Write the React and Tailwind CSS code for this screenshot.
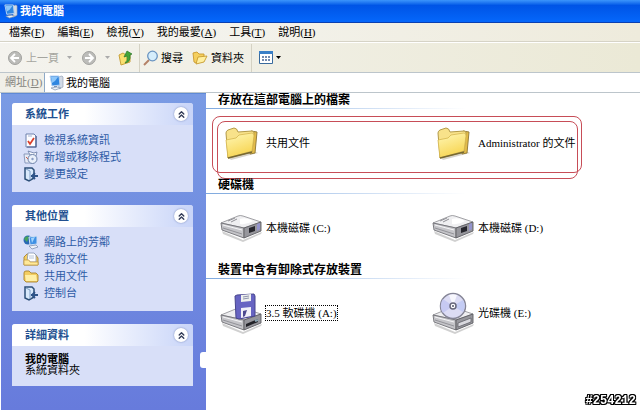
import React from 'react';
import { ChevronsUp } from 'lucide-react';

const menus = [
  { name: '檔案', hotkey: 'F' },
  { name: '編輯', hotkey: 'E' },
  { name: '檢視', hotkey: 'V' },
  { name: '我的最愛', hotkey: 'A' },
  { name: '工具', hotkey: 'T' },
  { name: '說明', hotkey: 'H' },
];

const ComputerIcon = ({ className }) => (
  <svg viewBox="0 0 16 16" className={className} aria-hidden="true">
    <path d="M10 2 L14 1 L15 2 V12 L11 14 Z" fill="#d3dbe6" stroke="#8796ab" strokeWidth=".6" />
    <path d="M2 1 L11 1 L12 10 L4 11 Z" fill="#2f86e0" stroke="#b9d3f2" strokeWidth="1" />
    <path d="M3 2 L10 2 L7 6 L4 8 Z" fill="#8cc6fa" />
    <path d="M6 11 L9 11 V12 H6 Z" fill="#7c93b5" />
    <path d="M3 13 L9 12 L13 13 L7 15 Z" fill="#eef2f7" stroke="#7f92ad" strokeWidth=".7" />
  </svg>
);

const SmallFolder = ({ open }) => (
  <svg viewBox="0 0 16 16" className="h-4 w-4 shrink-0" aria-hidden="true">
    {open ? (
      <>
        <path d="M1 3 L5 2 L7 4 L12 4 V7 L4 13 L2 12 Z" fill="#f5cf5e" stroke="#c9982e" strokeWidth=".9" />
        <path d="M4 14 L6 7 L15 6 L12 12 Z" fill="#ffef9f" stroke="#c79b2f" strokeWidth=".9" />
      </>
    ) : (
      <>
        <path d="M1 5 Q1 3 3 3 H6 L8 5 H13 L15 7 V13 L14 14 H3 L1 12 Z" fill="#f3cd62" stroke="#a9832f" strokeWidth=".9" />
        <path d="M2 7 H13 L14 13 H3 Z" fill="#ffefa6" />
      </>
    )}
  </svg>
);

const InfoIcon = () => (
  <svg viewBox="0 0 16 16" className="h-4 w-4 shrink-0" aria-hidden="true">
    <path d="M3 2 H11 L13 4 V15 H3 Z" fill="#fdfdff" stroke="#6d80ad" strokeWidth="1" />
    <path d="M13 4 V15 H4" fill="none" stroke="#4c5f8e" strokeWidth="1.200" />
    <path d="M5 4 H9" stroke="#a4b2d4" />
    <path d="M5 9 L7 12 L11 6" fill="none" stroke="#d9402c" strokeWidth="1.800" />
  </svg>
);

const ProgramsIcon = () => (
  <svg viewBox="0 0 16 16" className="h-4 w-4 shrink-0" aria-hidden="true">
    <path d="M1 5 H8 V14 H2 Z" fill="#e6ebf6" stroke="#8292b5" strokeWidth=".9" />
    <path d="M5 2 L11 4 L14 3 L13 7 L7 6 Z" fill="#f5f7fc" stroke="#7486ad" strokeWidth=".9" />
    <circle cx="9.500" cy="10" r="4.500" fill="#eaf0fa" stroke="#6d80a8" />
    <circle cx="9.500" cy="10" r="1.200" fill="#8a9cc4" />
    <path d="M3 8 L5 10" stroke="#c9614f" />
  </svg>
);

const SettingsIcon = () => (
  <svg viewBox="0 0 16 16" className="h-4 w-4 shrink-0" aria-hidden="true">
    <path d="M2 2 L9 2 L11 4 V12 L6 15 L2 13 Z" fill="#d9e9fb" stroke="#2d4f78" strokeWidth="1.500" />
    <path d="M3 3 L7 5 V14" fill="none" stroke="#7c9cc4" />
    <path d="M8 10 H15 M12 7 L9 10 L12 13" fill="none" stroke="#2f5488" strokeWidth="1.800" />
  </svg>
);

const NetworkIcon = () => (
  <svg viewBox="0 0 16 16" className="h-4 w-4 shrink-0" aria-hidden="true">
    <circle cx="5" cy="6" r="4.500" fill="#2868b4" />
    <path d="M1 5 Q3 1 6 3 L4 8 Z" fill="#46a35c" />
    <path d="M6 3 L14 2 V10 L7 11 Z" fill="#3f90e4" stroke="#d1e0f4" />
    <path d="M8 4 L12 3 L9 9 Z" fill="#a2d4fb" />
    <path d="M6 12 L13 11 L15 13 L9 15 Z" fill="#eef2f8" stroke="#7287aa" strokeWidth=".7" />
  </svg>
);

const DocumentsIcon = () => (
  <svg viewBox="0 0 16 16" className="h-4 w-4 shrink-0" aria-hidden="true">
    <path d="M1 14 V6 L4 3 H12 L15 7 V14 Z" fill="#f3cf68" stroke="#a9832f" strokeWidth=".9" />
    <path d="M5 2 H11 L13 4 V11 H4 Z" fill="#fff" stroke="#8796b3" strokeWidth=".8" />
    <path d="M6 5 H11 M6 7 H11" stroke="#a5b6d1" strokeWidth=".8" />
    <path d="M1 9 H6 L7 11 H15 V14 H1 Z" fill="#ffe999" stroke="#c19a3e" strokeWidth=".7" />
  </svg>
);

const FolderIcon = () => (
  <svg viewBox="0 0 42 42" className="h-[42px] w-[42px]" aria-hidden="true">
    <defs>
      <linearGradient id="folderFace" x1="0" y1="0" x2=".4" y2="1">
        <stop offset="0" stopColor="#fff8b8" />
        <stop offset="1" stopColor="#f7d552" />
      </linearGradient>
    </defs>
    <path d="M8 36 L32 29 L37 31 L10 38 Z" fill="#9a927a" opacity=".4" />
    <path d="M30 9 L36 10 L34 31 L29 32 Z" fill="#e3bb48" stroke="#97803d" />
    <path d="M5 11 Q5 9 7 8 L13 6 Q16 6 17 10 L31 9 Q33 9 33 11 L31 30 L7 36 Z" fill="#f8e28a" stroke="#b39a49" />
    <path d="M5 18 L15 16 L18 13 L31 11 Q33 11 33 14 L31 29 L7 36 Z" fill="url(#folderFace)" stroke="#d5b64f" strokeWidth=".8" />
    <path d="M7 36 L31 30" stroke="#766832" strokeWidth="1.500" />
  </svg>
);

// shared lower body of all the drive icons, origin at the top of the case
const DriveBody = () => (
  <>
    <path d="M2 17 L23 26 L42 18 L41 20 L23 28 L3 20 Z" fill="#777" opacity=".35" />
    <path d="M1 9 L18 2 Q20 1 23 2 L41 8 L24 14 Z" fill="#efeff1" stroke="#96969b" strokeWidth=".9" />
    <path d="M1 9 L24 14 V24 L2 16 Z" fill="#c5c5c9" stroke="#707076" strokeWidth=".9" />
    <path d="M24 14 L41 8 V17 L24 24 Z" fill="#96969c" stroke="#5d5d63" strokeWidth=".9" />
    <path d="M3 11 L22 16" stroke="#f5f5f7" />
    <path d="M3 14 L22 20" stroke="#85858c" strokeWidth=".8" />
  </>
);

const DiskIcon = () => (
  <svg viewBox="0 0 43 28" className="h-[28px] w-[43px]" aria-hidden="true">
    <DriveBody />
    <path d="M8 7 L15 4 M11 8 L17 5" stroke="#909096" />
    <path d="M20 10 Q27 11 33 7 Q27 3 20 5 Z" fill="#fff" />
    <path d="M29 14 L35 12 V17 L29 19 Z" fill="#26262d" />
    <path d="M37 10 L40 9 V15 L37 17 Z" fill="#9494cd" />
  </svg>
);

const FloppyIcon = () => (
  <svg viewBox="0 0 43 42" className="h-[42px] w-[43px]" aria-hidden="true">
    <g transform="translate(0 14)"><DriveBody /></g>
    <path d="M15 4 L17 3 L34 2 L35 4 V24 L19 27 L16 26 Z" fill="#6764c2" stroke="#47458d" />
    <path d="M21 3 L31 2 V9 L21 10 Z" fill="#eef0ee" />
    <path d="M23 5 L29 4 M23 7 L29 6" stroke="#8e93ac" />
    <path d="M21 16 L31 15 V24 L21 26 Z" fill="#f1f1f8" />
    <path d="M23 19 L27 18 L25 24 L23 25 Z" fill="#4c498f" />
    <path d="M26 32 L38 27 V30 L26 35 Z" fill="#222228" />
    <path d="M35 29 L38 28" stroke="#89a4b2" strokeWidth="2" />
  </svg>
);

const CdIcon = () => (
  <svg viewBox="0 0 43 42" className="h-[42px] w-[43px]" aria-hidden="true">
    <g transform="translate(0 14)"><DriveBody /></g>
    <path d="M26 31 L39 26 V30 L26 35 Z" fill="#d9d9df" stroke="#626268" strokeWidth=".8" />
    <circle cx="21" cy="14" r="12.500" fill="#dcdcf4" stroke="#858596" strokeWidth="1.500" />
    <path d="M21 14 L11 7 A12 12 0 0 0 11 21 Z" fill="#c6c9f2" />
    <path d="M21 14 L31 8 A12 12 0 0 1 31 20 Z" fill="#c4ccf4" />
    <path d="M21 14 L17 3 A12 12 0 0 1 25 3 Z" fill="#f7f7fd" />
    <circle cx="21" cy="14" r="3" fill="#fff" stroke="#67677a" strokeWidth="1.500" />
    <circle cx="21" cy="14" r="1" fill="#55556a" />
  </svg>
);

const TaskPanel = ({ title, children }) => (
  <section className="overflow-hidden rounded-t-[3px] bg-[#d8dff8]">
    <h2>
      <button className="flex h-[22px] w-full items-center justify-between bg-linear-to-r from-white from-40% to-[#c8d4f8] pr-[5px] pl-[13px] font-bold text-[#215090]">
        {title}
        <span className="grid h-[14px] w-[14px] place-items-center rounded-full bg-white text-[#333c58] shadow-[0_0_2px_#7384b6]">
          <ChevronsUp size={11} strokeWidth={3} />
        </span>
      </button>
    </h2>
    {children}
  </section>
);

const TaskList = ({ items }) => (
  <ul className="pt-[6px] pb-[10px] pl-[11px]">
    {items.map(({ label, icon }) => (
      <li key={label}>
        <a href="#" className="flex h-[17px] items-center gap-[5px] text-[#2e5ba6]">
          {icon}
          {label}
        </a>
      </li>
    ))}
  </ul>
);

const FileSection = ({ title, items, children }) => (
  <section className="relative">
    <h2 className="h-[15px] pl-[12px] text-[12px] leading-[15px] font-bold">{title}</h2>
    <div className="h-px w-[60%] bg-linear-to-r from-[#7fa9de] to-white" />
    <div className="flex h-[69px] items-center pb-[2px] pl-[14px]">
      {items.map(({ label, icon, focused }) => (
        <button key={label} className="flex w-[212px] shrink-0 items-center gap-[3px] text-left last:w-auto">
          <span className="grid w-[43px] shrink-0 place-items-center">{icon}</span>
          <span className={focused ? 'whitespace-nowrap outline-1 outline-dotted outline-black' : 'whitespace-nowrap'}>
            {label}
          </span>
        </button>
      ))}
    </div>
    {children}
  </section>
);

const systemTasks = [
  { label: '檢視系統資訊', icon: <InfoIcon /> },
  { label: '新增或移除程式', icon: <ProgramsIcon /> },
  { label: '變更設定', icon: <SettingsIcon /> },
];

const otherPlaces = [
  { label: '網路上的芳鄰', icon: <NetworkIcon /> },
  { label: '我的文件', icon: <DocumentsIcon /> },
  { label: '共用文件', icon: <SmallFolder /> },
  { label: '控制台', icon: <SettingsIcon /> },
];

const Caret = ({ className }) => (
  <svg viewBox="0 0 5 3" className={`h-[3px] w-[5px] ${className}`} aria-hidden="true">
    <path d="M0 0 H5 L2.500 3 Z" fill="currentColor" />
  </svg>
);

const Toolbar = () => (
  <div className="flex h-[30px] items-center border-t border-white bg-linear-to-r from-[#f4f3ee] to-[#ebe9d6] pl-[7px]">
    <button className="flex items-center gap-[3px] text-[#a5a59f]">
      <svg viewBox="0 0 16 16" className="h-4 w-4" aria-hidden="true">
        <circle cx="8" cy="8" r="6.500" fill="#bcbcb9" stroke="#a2a29f" />
        <path d="M12 8 H5 M8 4 L4 8 L8 12" fill="none" stroke="#fff" strokeWidth="1.800" />
      </svg>
      上一頁
    </button>
    <Caret className="ml-[8px] text-[#aaa]" />
    <button className="ml-[9px]" aria-label="下一頁">
      <svg viewBox="0 0 16 16" className="h-4 w-4" aria-hidden="true">
        <circle cx="8" cy="8" r="6.500" fill="#bcbcb9" stroke="#a2a29f" />
        <path d="M4 8 H11 M8 4 L12 8 L8 12" fill="none" stroke="#fff" strokeWidth="1.800" />
      </svg>
    </button>
    <Caret className="ml-[8px] text-[#aaa]" />
    <button className="ml-[8px]" aria-label="上移">
      <svg viewBox="0 0 16 16" className="h-4 w-4" aria-hidden="true">
        <path d="M1 5 L5 3 L8 5 L12 4 V12 L3 15 Z" fill="#f9e070" stroke="#c9a23c" />
        <path d="M7 13 Q10 11 9 6 L6 7 L9 1 L14 4 L12 5 Q13 12 7 13 Z" fill="#43a539" stroke="#26752a" strokeWidth=".7" />
      </svg>
    </button>
    <span className="ml-[5px] h-[28px] w-px bg-[#d5d2c4]" />
    <button className="ml-[3px] flex items-center gap-[2px]">
      <svg viewBox="0 0 16 16" className="h-4 w-4" aria-hidden="true">
        <path d="M6 10 L1 15" stroke="#b58268" strokeWidth="2" />
        <circle cx="9.500" cy="6" r="4.800" fill="#d5edfc" stroke="#6a94c1" strokeWidth="1.300" />
      </svg>
      搜尋
    </button>
    <button className="ml-[9px] flex items-center gap-[3px]">
      <SmallFolder open />
      資料夾
    </button>
    <span className="ml-[7px] h-[28px] w-px bg-[#d5d2c4]" />
    <button className="ml-[7px] flex items-center gap-[3px]" aria-label="檢視方式">
      <svg viewBox="0 0 14 13" className="h-[13px] w-[14px]" aria-hidden="true">
        <path d="M.5 .5 H13.500 V12.500 H.5 Z" fill="#fff" stroke="#396a9d" />
        <path d="M0 1.500 H14" stroke="#397fc7" strokeWidth="3" />
        <path d="M3 6 H5 M6 6 H8 M9 6 H11 M3 9 H5 M6 9 H8 M9 9 H11" stroke="#456595" strokeWidth="1.500" />
      </svg>
      <Caret className="text-black" />
    </button>
  </div>
);

const App = () => {
  return (
    <div className="flex min-h-screen flex-col bg-white font-['Liberation_Serif','Noto_Sans_CJK_TC',serif] text-[11px] leading-[14px] text-black">
      <header className="flex h-[23px] items-center gap-[2px] border-b border-[#0a3fb0] bg-linear-to-b from-[#3c95fb] via-[#0054e6] via-25% to-[#0567fb] pl-[3px] text-white">
        <ComputerIcon className="h-[15px] w-[15px]" />
        <h1 className="font-bold">我的電腦</h1>
      </header>

      <nav className="flex h-[19px] items-center gap-[13px] border-b border-[#d6d3c6] bg-linear-to-r from-[#f6f6f4] to-[#eeebdc] pl-[9px]">
        {menus.map((menu) => (
          <button key={menu.name} className="whitespace-nowrap">
            {menu.name}(<u>{menu.hotkey}</u>)
          </button>
        ))}
      </nav>

      <Toolbar />

      <div className="flex h-[21px] border-y border-[#bcc5cb] bg-[#f0efe8]">
        <label htmlFor="address" className="w-[44px] shrink-0 pl-[5px] leading-[18px] whitespace-nowrap text-[#85857f]">
          網址(<u>D</u>)
        </label>
        <div className="flex grow items-center gap-[2px] border-l border-[#8eaac8] bg-white pl-[3px]">
          <ComputerIcon className="h-[16px] w-[16px]" />
          <input id="address" defaultValue="我的電腦" className="min-w-0 grow outline-none" />
        </div>
      </div>

      <div className="flex grow">
        <aside className="relative ml-px flex w-[205px] shrink-0 flex-col gap-[13px] border-t border-[#5f8ad6] bg-linear-to-b from-[#7a9be4] to-[#677bdc] pt-[9px] pr-[13px] pl-[11px]">
          <TaskPanel title="系統工作">
            <TaskList items={systemTasks} />
          </TaskPanel>
          <TaskPanel title="其他位置">
            <TaskList items={otherPlaces} />
          </TaskPanel>
          <TaskPanel title="詳細資料">
            <div className="pt-[8px] pb-[10px] pl-[13px] leading-[11px]">
              <p className="font-bold">我的電腦</p>
              <p>系統資料夾</p>
            </div>
          </TaskPanel>
          <span className="absolute right-0 bottom-[42px] h-[16px] w-[6px] rounded-l-[3px] bg-white" />
        </aside>

        <main className="min-w-0 grow">
          <FileSection
            title="存放在這部電腦上的檔案"
            items={[
              { label: '共用文件', icon: <FolderIcon /> },
              { label: 'Administrator 的文件', icon: <FolderIcon /> },
            ]}
          >
            <div className="pointer-events-none absolute top-[23px] left-[6px] h-[57px] w-[370px] rounded-[8px] border border-[#c74d57]" />
            <div className="pointer-events-none absolute top-[28px] left-[11px] h-[58px] w-[361px] rounded-[8px] border border-[#c74d57]" />
          </FileSection>
          <FileSection
            title="硬碟機"
            items={[
              { label: '本機磁碟 (C:)', icon: <DiskIcon /> },
              { label: '本機磁碟 (D:)', icon: <DiskIcon /> },
            ]}
          />
          <FileSection
            title="裝置中含有卸除式存放裝置"
            items={[
              { label: '3.5 軟碟機 (A:)', icon: <FloppyIcon />, focused: true },
              { label: '光碟機 (E:)', icon: <CdIcon /> },
            ]}
          />
        </main>
      </div>

      <p className="fixed right-[4px] bottom-[2px] font-['Liberation_Mono',monospace] text-[12px] leading-[14px] font-bold text-white [text-shadow:1px_0_#000,-1px_0_#000,0_1px_#000,0_-1px_#000,1px_1px_#000,-1px_-1px_#000,1px_-1px_#000,-1px_1px_#000]">
        #254212
      </p>
    </div>
  );
};

export default App;
